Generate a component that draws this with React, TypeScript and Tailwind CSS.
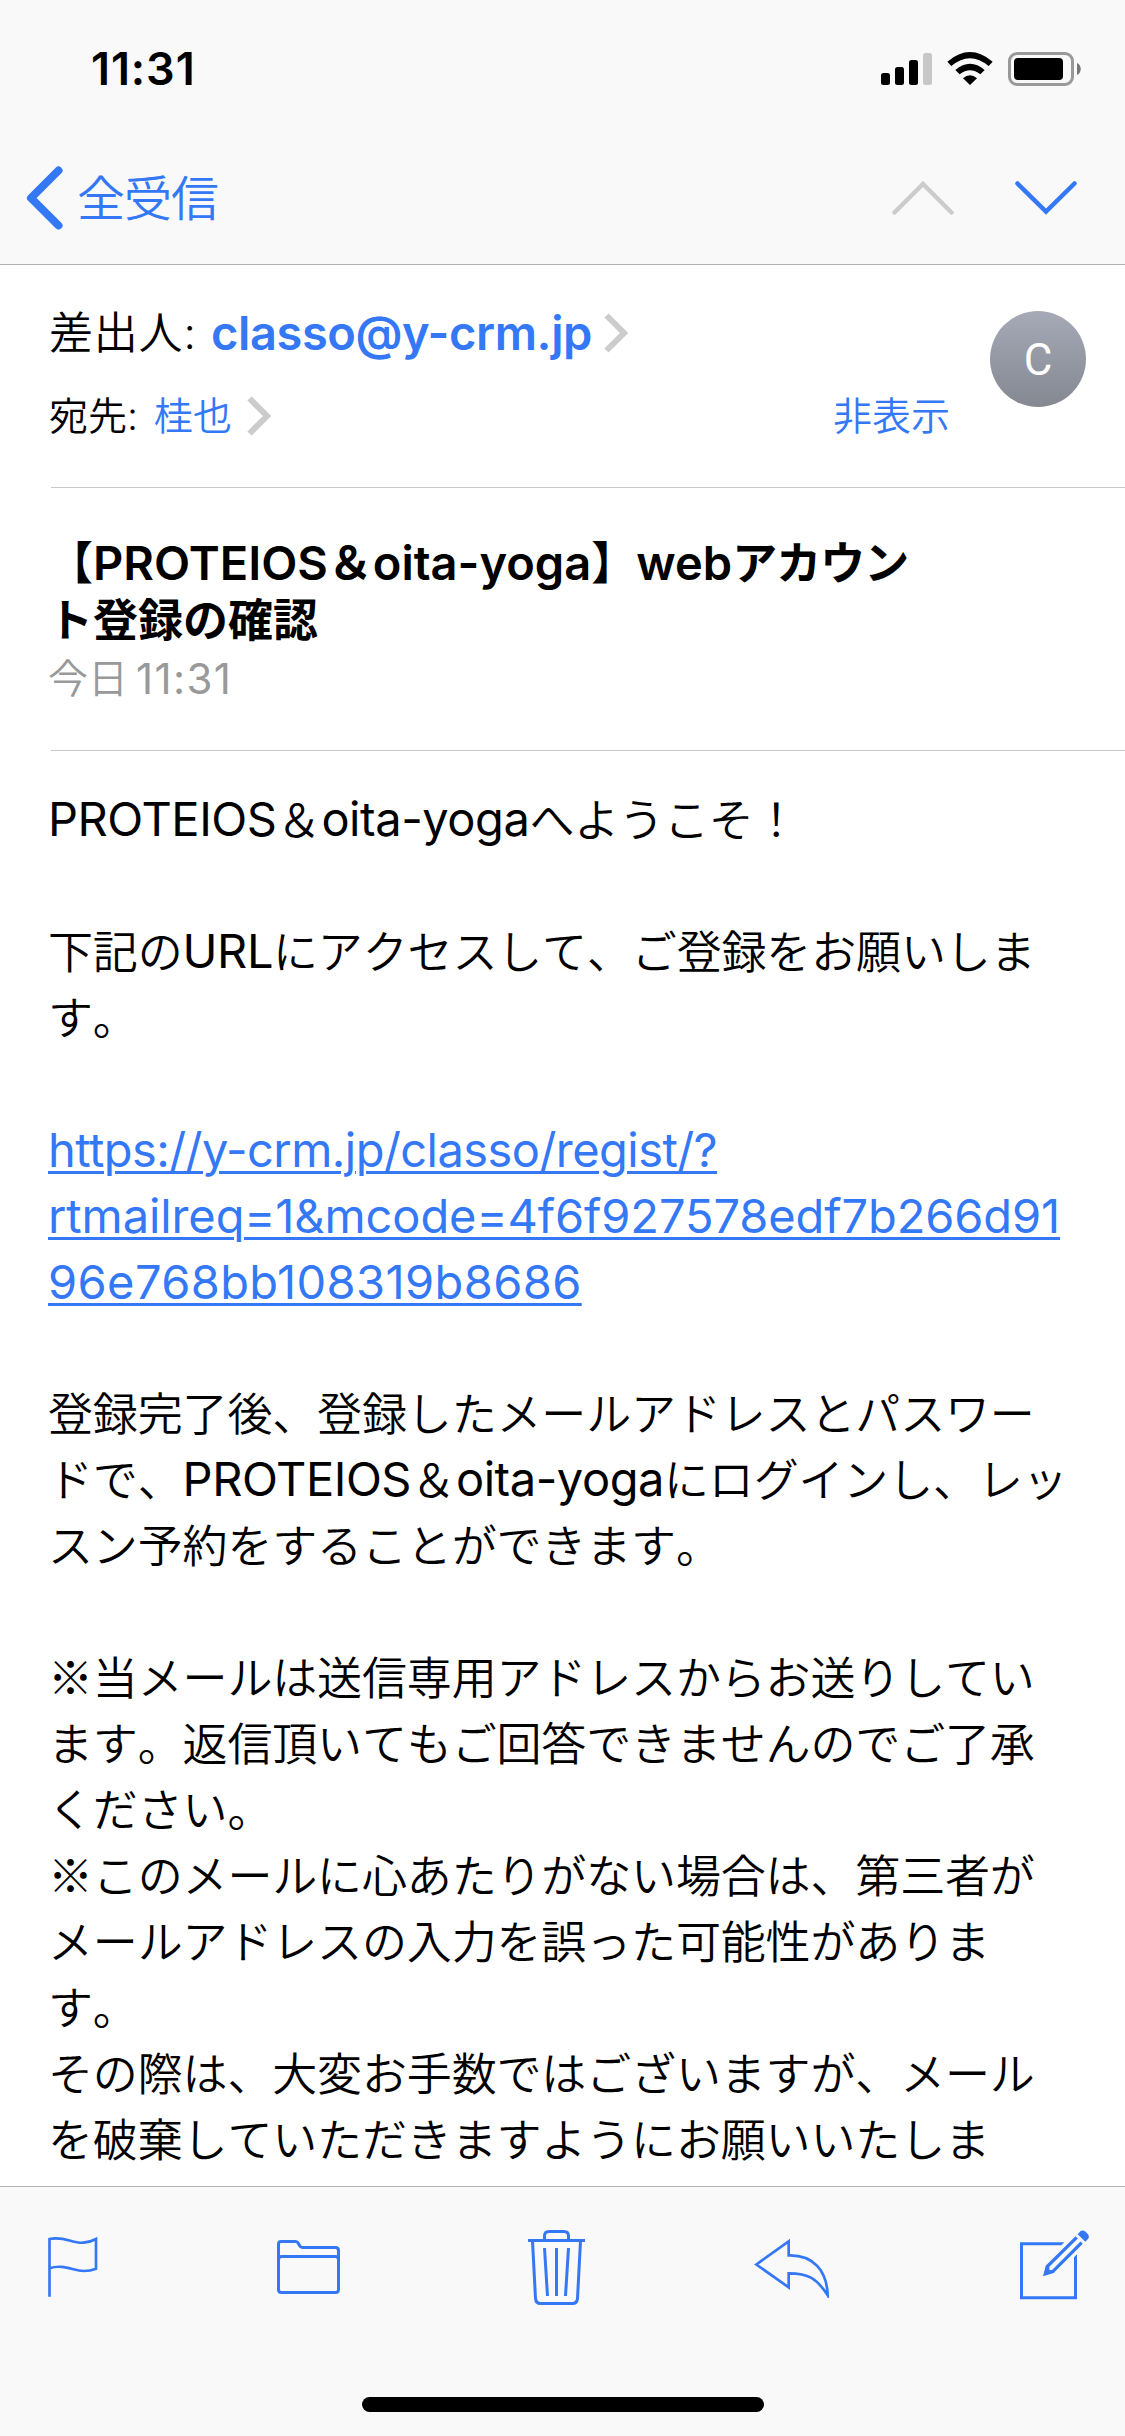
import React from "react";

const SignalIcon: React.FC = () => (
  <svg width="51" height="32" viewBox="0 0 51 32">
    <rect x="0" y="20" width="9" height="12" rx="2.5" />
    <rect x="14" y="14" width="9" height="18" rx="2.5" />
    <rect x="28" y="7" width="9" height="25" rx="2.5" />
    <rect x="42" y="0" width="9" height="32" rx="2.5" fill="#c7c7c7" />
  </svg>
);

const WifiIcon: React.FC = () => (
  <svg width="46" height="33" viewBox="0 0 138 99">
    <path d="M1 29Q69 -29 137 29L125 42Q69 -5 13 42Z" />
    <path d="M25 54Q69 17 113 54L100 67Q69 43 38 67Z" />
    <path d="M48 79Q69 60 90 79L69 99Z" />
  </svg>
);

const BatteryIcon: React.FC = () => (
  <svg width="73" height="34" viewBox="0 0 73 34">
    <rect x="1.5" y="1.5" width="63" height="31" rx="7.5" fill="none" stroke="#999" strokeWidth="3" />
    <rect x="6" y="6" width="49" height="22" rx="4" />
    <path d="M69 11C74 13 74 21 69 23Z" fill="#777" />
  </svg>
);

const Disclosure: React.FC<{ className: string }> = ({ className }) => (
  <svg className={className} width="24" height="40" viewBox="0 0 24 40" fill="none" stroke="#ccc" strokeWidth="6">
    <path d="M2.5 2.5L20 20L2.5 37.5" />
  </svg>
);

const StatusBar: React.FC = () => (
  <div className="flex h-[132px] items-start justify-between pl-[91px] pr-[44px] pt-[42px]">
    <div className="h-[54px] text-[45px] font-semibold leading-[54px] tracking-[0.9px]">11:31</div>
    <div className="flex pt-[10px]">
      <div className="pt-px">
        <SignalIcon />
      </div>
      <div className="ml-[15px]">
        <WifiIcon />
      </div>
      <div className="ml-[15px]">
        <BatteryIcon />
      </div>
    </div>
  </div>
);

const NavBar: React.FC = () => (
  <div className="flex h-[132px] items-center justify-between pl-[26px] pr-[48px] text-[#3478f6]">
    <div className="flex items-center">
      <svg width="38" height="64" viewBox="0 0 38 64" fill="none" stroke="currentColor" strokeWidth="8" strokeLinecap="round" strokeLinejoin="round">
        <path d="M32.500 4.500L5 32L32.500 59.500" />
      </svg>
      <span className="ml-[13px] mt-[2px] text-[48px] font-[350] leading-[64px] tracking-[-1px]">全受信</span>
    </div>
    <div className="flex">
      <svg width="62" height="34" viewBox="0 0 62 34" fill="none" stroke="#ccc" strokeWidth="4.500" strokeLinecap="round">
        <path d="M2.500 31.500L31 3L59.500 31.500" />
      </svg>
      <svg className="ml-[61px]" width="62" height="34" viewBox="0 0 62 34" fill="none" stroke="currentColor" strokeWidth="4.500" strokeLinecap="round">
        <path d="M2.500 2.500L31 30.500L59.500 2.500" />
      </svg>
    </div>
  </div>
);

const Sender: React.FC = () => (
  <div className="ml-[51px] flex h-[223px] items-start justify-between border-b border-[#c8c7cc] pr-[39px] pt-[34px]">
    <div className="-ml-[2px] pt-px">
      <div className="flex h-[66px] items-center text-[44px] font-[350]">
        <span className="w-[162px] whitespace-nowrap tracking-[0.8px]">差出人:</span>
        <span className="whitespace-nowrap text-[47px] font-semibold tracking-[-0.4px] text-[#3478f6]">classo@y-crm.jp</span>
        <Disclosure className="ml-[12px]" />
      </div>
      <div className="mt-[17px] flex h-[66px] items-center text-[39px] font-[350]">
        <span className="w-[105px] whitespace-nowrap">宛先:</span>
        <span className="text-[#3478f6]">桂也</span>
        <Disclosure className="ml-[15px]" />
      </div>
    </div>
    <div className="flex">
      <div className="mr-[40px] mt-[84px] text-[39px] font-[350] leading-[66px] text-[#3478f6]">非表示</div>
      <div className="mt-[12px] flex h-24 w-24 items-center justify-center rounded-full bg-gradient-to-b from-[#a6aab7] to-[#848891] pt-[2px] font-['Roboto',sans-serif] text-[44px] font-normal text-white">
        C
      </div>
    </div>
  </div>
);

const Subject: React.FC = () => (
  <div className="ml-[51px] h-[263px] border-b border-[#c8c7cc] pt-[46px]">
    <div className="-ml-[3px]">
      <div className="h-[58px] whitespace-nowrap text-[45px] font-bold leading-[58px]">
        【<span className="text-[47px] font-semibold">PROTEIOS</span>＆<span className="text-[47px] font-semibold">oita-yoga</span>】<span className="text-[47px] font-semibold">web</span><span className="tracking-[-1px]">アカウン</span>
      </div>
      <div className="h-[58px] text-[45px] font-bold leading-[58px]">ト登録の確認</div>
      <div className="flex text-[40px] font-[350] leading-[58px] text-[#999]">
        今日<span className="ml-[8px] text-[42px] font-normal tracking-[1.4px]">11:31</span>
      </div>
    </div>
  </div>
);

const Latin: React.FC<{ children: string }> = ({ children }) => (
  <span className="align-[1px] text-[47px] font-normal leading-[0] tracking-[-0.45px] [font-kerning:normal]">{children}</span>
);

const Line: React.FC<{ children: React.ReactNode }> = ({ children }) => (
  <div className="h-[66px] whitespace-nowrap">{children}</div>
);

const Kome: React.FC = () => <span className="font-['Noto_Sans_CJK_JP',sans-serif] leading-[0]">※</span>;

const Body: React.FC = () => (
  <div className="flex h-[1435px] flex-col gap-[66px] overflow-hidden pl-[48px] pt-[37px] text-[45px] font-[350] leading-[66px] tracking-[-0.15px] [font-kerning:none]">
    <div>
      <Line><Latin>PROTEIOS</Latin>＆<Latin>oita-yoga</Latin>へようこそ！</Line>
    </div>
    <div>
      <Line>下記の<Latin>URL</Latin>にアクセスして、ご登録をお願いしま</Line>
      <Line>す。</Line>
    </div>
    <div className="-mt-px mb-px text-[47px] font-normal text-[#3478f6] underline decoration-[3px] underline-offset-[4px] [font-kerning:normal]">
      <div className="h-[66px] tracking-[-0.55px]">https://y-crm.jp/classo/regist/?</div>
      <div className="h-[66px] tracking-[-0.1px]">rtmailreq=1&mcode=4f6f927578edf7b266d91</div>
      <div className="h-[66px] tracking-[0.4px]">96e768bb108319b8686</div>
    </div>
    <div>
      <Line>登録完了後、登録したメールアドレスとパスワー</Line>
      <Line>ドで、<Latin>PROTEIOS</Latin>＆<Latin>oita-yoga</Latin>にログインし、レッ</Line>
      <Line>スン予約をすることができます。</Line>
    </div>
    <div>
      <Line><Kome />当メールは送信専用アドレスからお送りしてい</Line>
      <Line>ます。返信頂いてもご回答できませんのでご了承</Line>
      <Line>ください。</Line>
      <Line><Kome />このメールに心あたりがない場合は、第三者が</Line>
      <Line>メールアドレスの入力を誤った可能性がありま</Line>
      <Line>す。</Line>
      <Line>その際は、大変お手数ではございますが、メール</Line>
      <Line>を破棄していただきますようにお願いいたしま</Line>
    </div>
  </div>
);

const Toolbar: React.FC = () => (
  <div className="h-[250px] border-t border-[#b2b2b2] bg-[#f9f9f9] pt-[43px]">
    <div className="flex h-[76px] items-start pl-[48px] text-[#3478f6]">
      <svg className="mt-[6px]" width="50" height="61" viewBox="144 199 150 183" fill="none" stroke="currentColor" strokeWidth="8">
        <path d="M148.500 381V208C190 198 220 222 250 219Q272 217 288 208V297Q272 304 250 304C220 304 190 282 148.500 296" />
      </svg>
      <svg className="ml-[179px] mt-[10px]" width="63" height="54" viewBox="0 0 63 54" fill="none" stroke="currentColor" strokeWidth="3">
        <path d="M1.500 4Q1.500 1.500 4 1.500H18.500Q20.500 1.500 21.500 3.500L22.500 5.500Q23.500 7.500 25.500 7.500H58.500Q61.500 7.500 61.500 10.500V49.500Q61.500 52.500 58.500 52.500H4.500Q1.500 52.500 1.500 49.500ZM1.500 19.500Q1.500 16.500 4.500 16.500H58.500Q61.500 16.500 61.500 19.500" />
      </svg>
      <svg className="ml-[188px]" width="57" height="75" viewBox="0 0 57 75" fill="none" stroke="currentColor" strokeWidth="3">
        <path d="M0 10.500H57M16.500 10V6Q16.500 1.500 21 1.500H36Q40.500 1.500 40.500 6V10M4.500 11L7.500 68.500Q8 73.500 12.500 73.500H44.500Q49 73.500 49.500 68.500L52.500 11M16.500 18L19.500 66M28.500 18V66M40.500 18L37.500 66" />
      </svg>
      <svg className="ml-[169px] mt-[8px]" width="76" height="60" viewBox="822 204 228 180" fill="none" stroke="currentColor" strokeWidth="8">
        <path d="M829 283.500L926 214V256C1000 254 1041 302 1043 376C1010 324 985 310 926 310V352Z" />
      </svg>
      <svg className="ml-[190px]" width="70" height="70" viewBox="480 179 210 210">
        <path d="M613 216L604 225H489V378H642V261L651 252V387H480V216Z" fill="currentColor" />
        <path d="M650 201L563 287L558 308L579 303L665 217" fill="none" stroke="currentColor" strokeWidth="10" />
        <path d="M549 318L558 284L568 291V298L575 301L583 307Z" fill="currentColor" />
        <path d="M653 192L661 183Q668 178 675 183L684 192Q689 200 684 206L676 214Z" fill="currentColor" />
      </svg>
    </div>
    <div className="mx-auto mt-[91px] h-[15px] w-[402px] rounded-full bg-black" />
  </div>
);

const App: React.FC = () => {
  return (
    <div className="h-[2436px] w-[1125px] overflow-hidden bg-white font-['Inter','Noto_Sans_CJK_JP',sans-serif] font-normal text-black">
      <div className="h-[265px] border-b border-[#b2b2b2] bg-[#f9f9f9]">
        <StatusBar />
        <NavBar />
      </div>
      <Sender />
      <Subject />
      <Body />
      <Toolbar />
    </div>
  );
};

export default App;
